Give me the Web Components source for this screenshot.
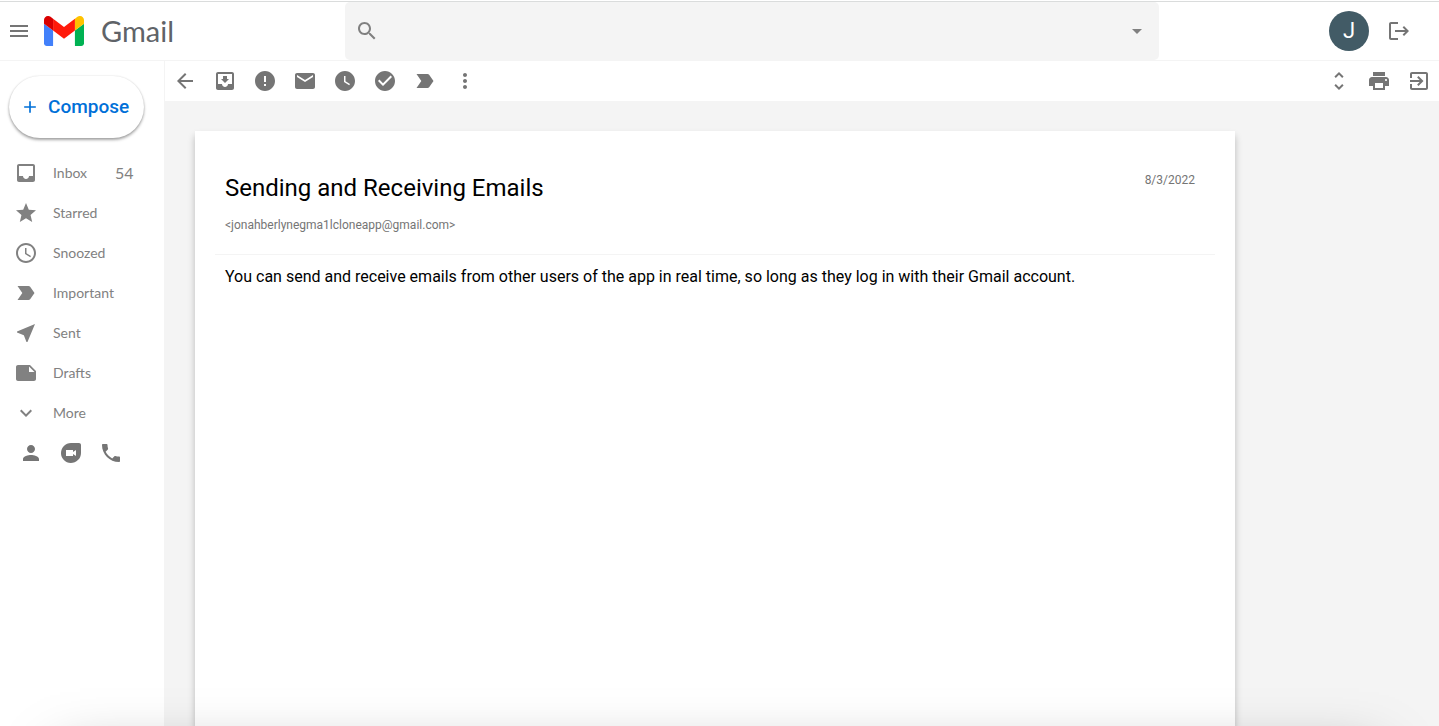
<!DOCTYPE html>
<html lang="en">
<head>
<meta charset="utf-8">
<meta name="viewport" content="width=device-width, initial-scale=1">
<title>Gmail</title>
<style>
  body { margin: 0; background: #fff; font-family: Roboto, "Liberation Sans", sans-serif; overflow: hidden; }
</style>
</head>
<body>
<gm-app>
  <gm-header slot="header"></gm-header>
  <gm-sidebar slot="sidebar">
    <gm-nav-item icon="inbox" count="54">Inbox</gm-nav-item>
    <gm-nav-item icon="star">Starred</gm-nav-item>
    <gm-nav-item icon="clock">Snoozed</gm-nav-item>
    <gm-nav-item icon="important">Important</gm-nav-item>
    <gm-nav-item icon="sent">Sent</gm-nav-item>
    <gm-nav-item icon="note">Drafts</gm-nav-item>
    <gm-nav-item icon="more">More</gm-nav-item>
  </gm-sidebar>
  <gm-toolbar>
    <gm-icon-button icon="back" label="Back"></gm-icon-button>
    <gm-icon-button icon="archive" label="Move to inbox"></gm-icon-button>
    <gm-icon-button icon="error" label="Report spam"></gm-icon-button>
    <gm-icon-button icon="mail" label="Mark as unread"></gm-icon-button>
    <gm-icon-button icon="later" label="Snooze"></gm-icon-button>
    <gm-icon-button icon="check" label="Add to tasks"></gm-icon-button>
    <gm-icon-button icon="important" label="Mark as important"></gm-icon-button>
    <gm-icon-button icon="dots" label="More options"></gm-icon-button>
    <gm-icon-button slot="end" icon="unfold" label="Expand"></gm-icon-button>
    <gm-icon-button slot="end" icon="print" label="Print"></gm-icon-button>
    <gm-icon-button slot="end" icon="exit" label="Open in new window"></gm-icon-button>
  </gm-toolbar>
  <gm-mail>
    <span slot="subject">Sending and Receiving Emails</span>
    <span slot="sender">&lt;jonahberlynegma1lcloneapp@gmail.com&gt;</span>
    <span slot="date">8/3/2022</span>
    You can send and receive emails from other users of the app in real time, so long as they log in with their Gmail account.
  </gm-mail>
</gm-app>
<script>
const ICONS = {
  menu: 'M3 18h18v-2H3v2zm0-5h18v-2H3v2zm0-7v2h18V6H3z',
  search: 'M15.5 14h-.79l-.28-.27C15.41 12.59 16 11.11 16 9.5 16 5.91 13.09 3 9.5 3S3 5.91 3 9.5 5.91 16 9.5 16c1.61 0 3.09-.59 4.23-1.57l.27.28v.79l5 4.99L20.49 19l-4.99-5zm-6 0C7.01 14 5 11.99 5 9.5S7.01 5 9.5 5 14 7.01 14 9.5 11.99 14 9.5 14z',
  drop: 'M7 10l5 5 5-5z',
  logout: 'M4 3h7v2H4v14h7v2H4c-1.100 0-2-.9-2-2V5c0-1.100.9-2 2-2zM17 7l5 5-5 5-1.400-1.400L18.200 13H8v-2h10.200l-2.600-2.600z',
  add: 'M19 13h-6v6h-2v-6H5v-2h6V5h2v6h6v2z',
  inbox: 'M19 3H4.990c-1.110 0-1.980.89-1.980 2L3 19c0 1.100.88 2 1.990 2H19c1.100 0 2-.9 2-2V5c0-1.110-.9-2-2-2zm0 12h-4c0 1.660-1.350 3-3 3s-3-1.340-3-3H4.990V5H19v10z',
  star: 'M12 17.270L18.180 21l-1.640-7.030L22 9.240l-7.190-.61L12 2 9.190 8.630 2 9.240l5.460 4.730L5.820 21z',
  clock: 'M11.990 2C6.470 2 2 6.480 2 12s4.470 10 9.990 10C17.520 22 22 17.520 22 12S17.520 2 11.990 2zM12 20c-4.420 0-8-3.580-8-8s3.580-8 8-8 8 3.580 8 8-3.580 8-8 8zM12.500 7H11v6l5.250 3.150.75-1.230-4.500-2.670z',
  important: 'M3.500 18.990l11 .01c.67 0 1.270-.33 1.630-.84L20.500 12l-4.370-6.160c-.36-.51-.96-.84-1.630-.84l-11 .01L8.340 12 3.500 18.990z',
  sent: 'M21 3L3 10.530v.98l6.840 2.650L12.480 21h.98L21 3z',
  note: 'M22 10l-6-6H4c-1.100 0-2 .9-2 2v12.010c0 1.100.9 1.990 2 1.990l16-.01c1.100 0 2-.89 2-1.990v-8zm-7-4.500l5.500 5.500H15V5.500z',
  more: 'M16.590 8.590L12 13.170 7.410 8.590 6 10l6 6 6-6z',
  person: 'M12 12c2.210 0 4-1.790 4-4s-1.790-4-4-4-4 1.790-4 4 1.790 4 4 4zm0 2c-2.670 0-8 1.340-8 4v2h16v-2c0-2.660-5.330-4-8-4z',
  duo: 'M12 2C6.380 2 2 6.660 2 12.280 2 17.500 6.490 22 11.720 22 17.390 22 22 17.620 22 12V4c0-1.100-.9-2-2-2h-8zm5 13l-3-2v2H7V9h7v2l3-2v6z',
  phone: 'M6.620 10.790c1.440 2.830 3.760 5.140 6.590 6.590l2.200-2.200c.27-.27.67-.36 1.020-.24 1.120.37 2.330.57 3.570.57.55 0 1 .45 1 1V20c0 .55-.45 1-1 1-9.390 0-17-7.610-17-17 0-.55.45-1 1-1h3.500c.55 0 1 .45 1 1 0 1.250.2 2.450.57 3.570.11.35.03.74-.25 1.020l-2.200 2.200z',
  back: 'M20 11H7.830l5.590-5.590L12 4l-8 8 8 8 1.410-1.410L7.830 13H20v-2z',
  archive: 'M19 3H4.990c-1.110 0-1.980.9-1.980 2L3 19c0 1.100.88 2 1.990 2H19c1.100 0 2-.9 2-2V5c0-1.100-.9-2-2-2zm0 12h-4c0 1.660-1.350 3-3 3s-3-1.340-3-3H4.990V5H19v10zm-3-5h-2V7h-4v3H8l4 4 4-4z',
  error: 'M12 2C6.480 2 2 6.480 2 12s4.480 10 10 10 10-4.480 10-10S17.520 2 12 2zm1 15h-2v-2h2v2zm0-4h-2V7h2v6z',
  mail: 'M20 4H4c-1.100 0-1.990.9-1.990 2L2 18c0 1.100.9 2 2 2h16c1.100 0 2-.9 2-2V6c0-1.100-.9-2-2-2zm0 4l-8 5-8-5V6l8 5 8-5v2z',
  later: 'M12 2C6.500 2 2 6.500 2 12s4.500 10 10 10 10-4.500 10-10S17.500 2 12 2zm4.200 14.200L11 13V7h1.500v5.200l4.500 2.700-.8 1.300z',
  check: 'M12 2C6.480 2 2 6.480 2 12s4.480 10 10 10 10-4.480 10-10S17.520 2 12 2zm-2 15l-5-5 1.410-1.410L10 14.170l7.590-7.590L19 8l-9 9z',
  dots: 'M12 8c1.100 0 2-.9 2-2s-.9-2-2-2-2 .9-2 2 .9 2 2 2zm0 2c-1.100 0-2 .9-2 2s.9 2 2 2 2-.9 2-2-.9-2-2-2zm0 6c-1.100 0-2 .9-2 2s.9 2 2 2 2-.9 2-2-.9-2-2-2z',
  unfold: 'M12 5.830L15.170 9l1.410-1.410L12 3 7.410 7.590 8.830 9 12 5.830zm0 12.340L8.830 15l-1.410 1.410L12 21l4.590-4.590L15.170 15 12 18.170z',
  print: 'M19 8H5c-1.660 0-3 1.340-3 3v6h4v4h12v-4h4v-6c0-1.660-1.340-3-3-3zm-3 11H8v-5h8v5zm3-7c-.55 0-1-.45-1-1s.45-1 1-1 1 .45 1 1-.45 1-1 1zm-1-9H6v4h12V3z',
  exit: 'M10.090 15.590L11.500 17l5-5-5-5-1.410 1.410L12.670 11H3v2h9.670l-2.580 2.590zM19 3H5c-1.110 0-2 .9-2 2v4h2V5h14v14H5v-4H3v4c0 1.100.89 2 2 2h14c1.100 0 2-.9 2-2V5c0-1.100-.9-2-2-2z'
};

class Base extends HTMLElement {
  connectedCallback() {
    if (this.shadowRoot) return;
    this.attachShadow({ mode: 'open' }).innerHTML =
      `<style>*{box-sizing:border-box}${this.css()}</style>${this.html()}`;
  }
}

customElements.define('gm-icon', class extends Base {
  css() { return `:host{display:block;flex:none;width:var(--icon-size,24px);height:var(--icon-size,24px)} svg{display:block;width:100%;height:100%;fill:currentColor}`; }
  html() { return `<svg viewBox="0 0 24 24" aria-hidden="true"><path d="${ICONS[this.getAttribute('name')]}"/></svg>`; }
});

customElements.define('gm-icon-button', class extends Base {
  css() { return `:host{display:block;flex:none;color:#757575} button{display:grid;place-items:center;width:var(--button-size,40px);height:40px;padding:0;border:0;background:none;color:inherit;cursor:pointer}`; }
  html() { return `<button type="button" aria-label="${this.getAttribute('label')}"><gm-icon name="${this.getAttribute('icon')}"></gm-icon></button>`; }
});

customElements.define('gm-logo', class extends Base {
  css() { return `:host{display:flex;align-items:center;gap:17px} svg{display:block;width:40px;height:30px} span{font:400 29px/40px Lato,sans-serif;color:#5f6368}`; }
  html() { return `<svg viewBox="52 42 88 66" aria-hidden="true">
    <path fill="#4280fa" d="M58 108h14V74L52 59v43c0 3.320 2.690 6 6 6"/>
    <path fill="#00b253" d="M120 108h14c3.320 0 6-2.690 6-6V59l-20 15"/>
    <path fill="#ffc200" d="M120 48v26l20-15v-8c0-7.420-8.470-11.650-14.400-7.200"/>
    <path fill="#ff1a0b" d="M72 74V48l24 18 24-18v26L96 92"/>
    <path fill="#d90000" d="M52 51v8l20 15V48l-5.600-4.200c-5.940-4.450-14.400-.22-14.400 7.200"/>
  </svg><span>Gmail</span>`; }
});

customElements.define('gm-header', class extends Base {
  css() { return `
    :host{display:grid;grid-template-columns:345px minmax(0,1fr) 280px;align-items:center;margin-top:1px;border-top:1px solid #dadcdc;border-bottom:1px solid #f4f4f4;background:#fff}
    .brand{display:flex;align-items:center;gap:10px;padding-left:4px}
    .brand gm-icon-button{--button-size:30px}
    .search{display:flex;align-items:center;height:58px;padding:0 10px;border-radius:5px;background:#f4f4f4;color:#808080}
    input{flex:1;min-width:0;height:40px;padding:0 10px;border:0;outline:0;background:none;font:16px/20px Roboto,sans-serif}
    .account{display:flex;align-items:center;justify-content:flex-end;gap:10px;padding-right:20px}
    .avatar{display:grid;place-items:center;width:40px;height:40px;padding:0;border:0;border-radius:50%;background:#425b66;color:#fff;font:400 22px/40px Roboto,sans-serif}`; }
  html() { return `
    <div class="brand"><gm-icon-button icon="menu" label="Main menu"></gm-icon-button><gm-logo></gm-logo></div>
    <div class="search"><gm-icon name="search"></gm-icon><input type="text" aria-label="Search mail"><gm-icon name="drop"></gm-icon></div>
    <div class="account"><button class="avatar" type="button">J</button><gm-icon-button icon="logout" label="Log out"></gm-icon-button></div>`; }
});

customElements.define('gm-nav-item', class extends Base {
  css() { return `
    :host{display:block}
    a{display:grid;grid-template-columns:24px 62px auto;align-items:center;height:40px;padding-left:14px;color:#818181;text-decoration:none;font:400 14px/20px Lato,sans-serif}
    .label{padding-left:15px;white-space:nowrap}
    .count{padding-left:15px;font-size:16px}`; }
  html() { const n = this.getAttribute('count');
    return `<a href="#"><gm-icon name="${this.getAttribute('icon')}"></gm-icon><span class="label"><slot></slot></span>${n ? `<span class="count">${n}</span>` : ''}</a>`; }
});

customElements.define('gm-sidebar', class extends Base {
  css() { return `
    :host{display:block;padding-top:15px}
    .compose{display:flex;align-items:center;gap:8px;width:135px;height:62px;margin:0 0 15px 9px;padding:0 0 0 11px;border:0;border-radius:31px;background:#fff;box-shadow:0 2px 3px rgba(0,0,0,.35),0 0 2px rgba(0,0,0,.12);color:#0070d8;font:500 19px/24px Roboto,sans-serif;--icon-size:20px}
    .contacts{display:flex;padding-left:11px}`; }
  html() { return `
    <button class="compose" type="button"><gm-icon name="add"></gm-icon>Compose</button>
    <nav><slot></slot></nav>
    <div class="contacts"><gm-icon-button icon="person" label="Contacts"></gm-icon-button><gm-icon-button icon="duo" label="Meet"></gm-icon-button><gm-icon-button icon="phone" label="Phone"></gm-icon-button></div>`; }
});

customElements.define('gm-toolbar', class extends Base {
  css() { return `:host{display:flex;justify-content:space-between;background:#fff} div{display:flex}`; }
  html() { return `<div><slot></slot></div><div><slot name="end"></slot></div>`; }
});

customElements.define('gm-mail', class extends Base {
  css() { return `
    :host{display:block;flex:1;margin:30px 204px 0 30px;padding:20px;background:#fff;box-shadow:0 5px 7px rgba(0,0,0,.24);color:#000}
    header{display:flex;align-items:flex-start;justify-content:space-between;padding:20px 20px 22px 10px;border-bottom:1px solid #f4f4f4}
    h1{margin:0 0 13px;font:400 24px/34px Roboto,sans-serif}
    p{margin:0}
    .small{color:#757575;font:400 12px/14px Roboto,sans-serif}
    .date{padding-top:2px}
    .body{padding:12px 10px;font:400 16px/20px Roboto,sans-serif}`; }
  html() { return `
    <header><div><h1><slot name="subject"></slot></h1><p class="small"><slot name="sender"></slot></p></div><p class="small date"><slot name="date"></slot></p></header>
    <p class="body"><slot></slot></p>`; }
});

customElements.define('gm-app', class extends Base {
  css() { return `
    :host{display:flex;flex-direction:column;height:100vh}
    .main{display:grid;grid-template-columns:164px minmax(0,1fr);flex:1;min-height:0}
    .content{display:flex;flex-direction:column;border-left:1px solid #f4f4f4;background:#f4f4f4}
    /* soft shade rising from below the window's bottom edge */
    .shade{position:fixed;top:calc(100% + 30px);left:60px;right:60px;height:200px;box-shadow:0 0 56px rgba(0,0,0,.35);pointer-events:none}`; }
  html() { return `<slot name="header"></slot><div class="main"><slot name="sidebar"></slot><main class="content"><slot></slot></main></div><div class="shade"></div>`; }
});
</script>
</body>
</html>
